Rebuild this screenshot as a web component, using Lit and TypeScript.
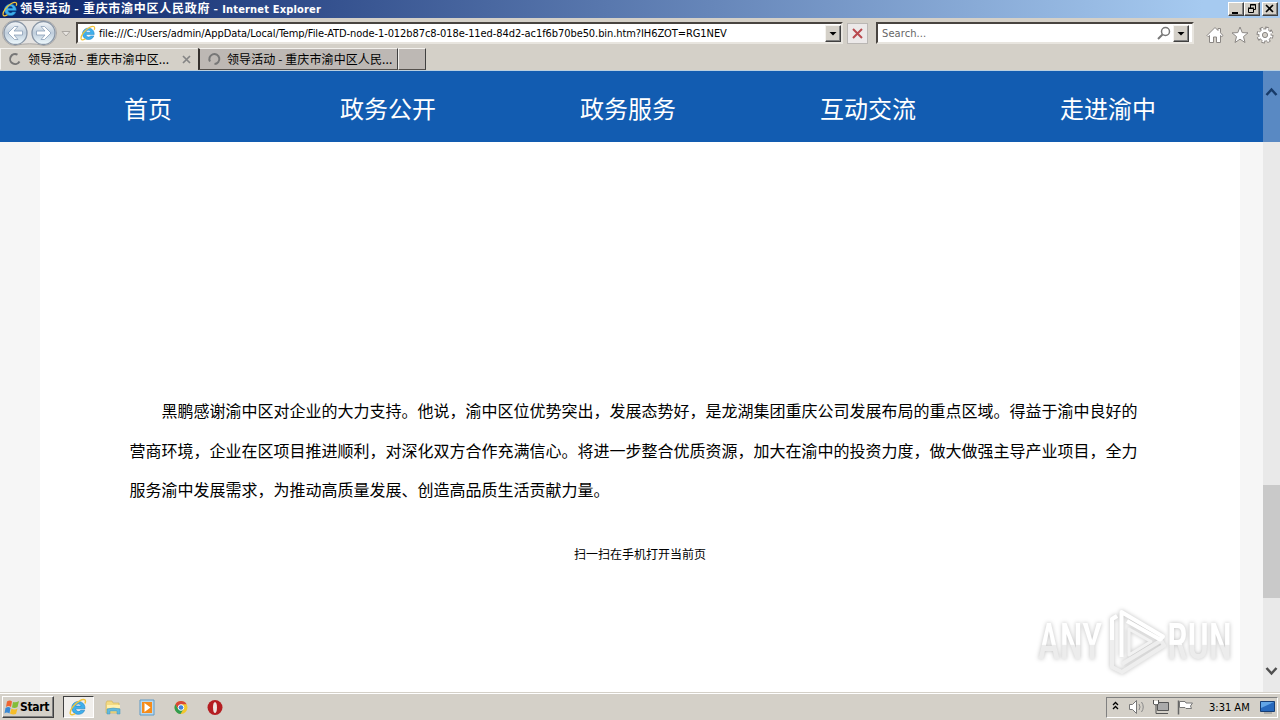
import { LitElement, css, html, svg } from 'lit'
import { customElement } from 'lit/decorators.js'

const ieLogo = (size: number) => html`
  <svg width=${size} height=${size} viewBox="0 0 16 16">
    <path d="M14.2 9.6H6C6.2 12.3 9.7 12.6 10.4 10.9h3.5C12.2 16.3 2.4 15.8 2.5 8.7 2.6 1.2 14.7 1.1 14.2 9.6ZM6 7.2H10.7C10.4 4.7 6.4 4.7 6 7.2Z" fill="#3fb0ec" stroke="#1b7cc0" stroke-width=".5"/>
    <path d="M14.2 4.8C15.6 1.2 13.2.4 9.4 2.5 4.7 5 .2 11.2 1.2 14c.5 1.3 2.6.9 4.3-.2" fill="none" stroke="#f1c33a" stroke-width="1.3"/>
  </svg>`

const spinner = (flip = false) => html`
  <svg width="14" height="14" viewBox="0 0 14 14">
    <path d=${flip ? 'M3 9.5A5 5 0 1 1 7.5 12' : 'M11.5 9.5A5 5 0 1 1 9.5 2.7'} fill="none" stroke="#777" stroke-width="2"/>
  </svg>`

const arrow = (left: boolean) => svg`
  <g transform=${left ? 'translate(15.5 15)' : 'translate(43.5 15) scale(-1 1)'}>
    <circle r="11.5" fill="url(#ball)" stroke="#8996a6" stroke-width="1.3"/>
    <path d="M-7.5 0 L-1 -6.5 H2.5 L-1.5 -2 H7 V2 H-1.5 L2.5 6.5 H-1Z" fill="#fff" stroke="#8ba0b8" stroke-width=".8"/>
  </g>`

const menu = ['首页', '政务公开', '政务服务', '互动交流', '走进渝中']

const lines = [
  '黑鹏感谢渝中区对企业的大力支持。他说，渝中区位优势突出，发展态势好，是龙湖集团重庆公司发展布局的重点区域。得益于渝中良好的',
  '营商环境，企业在区项目推进顺利，对深化双方合作充满信心。将进一步整合优质资源，加大在渝中的投资力度，做大做强主导产业项目，全力',
  '服务渝中发展需求，为推动高质量发展、创造高品质生活贡献力量。',
]

@customElement('app-root')
export class AppRoot extends LitElement {
  static styles = css`
    :host {
      display: flex;
      flex-direction: column;
      width: 1280px;
      height: 720px;
      overflow: hidden;
      background: #d4d0c8;
      color: #000;
      font-family: "DejaVu Sans Condensed", "DejaVu Sans", "Noto Sans CJK SC", sans-serif;
      font-stretch: condensed;
      font-size: 11px;
    }
    * {
      box-sizing: border-box;
    }
    svg {
      display: block;
      flex: none;
    }
    .title {
      height: 18px;
      flex: none;
      display: flex;
      align-items: center;
      padding: 0 2px;
      gap: 2px;
      background: linear-gradient(90deg, #0a246a, #a6caf0 94%);
      color: #fff;
      font-weight: bold;
    }
    .title-text {
      flex: 1;
      margin-top: -3px;
      white-space: nowrap;
      letter-spacing: 0.17px;
    }
    .cn {
      font-family: "Noto Sans CJK SC", sans-serif;
      font-size: 12px;
    }
    .title .cn {
      letter-spacing: 0.72px;
    }
    .title-buttons {
      display: flex;
    }
    .winbtn {
      width: 16px;
      height: 14px;
      background: #d4d0c8;
      border: 1px solid;
      border-color: #fff #404040 #404040 #fff;
      box-shadow: inset -1px -1px #808080;
    }
    .winbtn:last-child {
      margin-left: 2px;
    }
    .toolbar {
      height: 30px;
      flex: none;
      display: flex;
      align-items: center;
    }
    .back {
      width: 76px;
    }
    .field {
      height: 22px;
      display: flex;
      align-items: center;
      background: #fff;
      border: 2px solid;
      border-color: #484440 #e8e5df #e8e5df #484440;
    }
    .address {
      width: 767px;
      padding-left: 2px;
      gap: 3px;
    }
    .url {
      flex: 1;
      white-space: nowrap;
      letter-spacing: -0.08px;
    }
    .drop {
      width: 16px;
      height: 17px;
      background: #d4d0c8;
      border: 1px solid;
      border-color: #f4f2ee #404040 #404040 #f4f2ee;
      box-shadow: inset -1px -1px #808080;
    }
    .stop {
      width: 21px;
      height: 21px;
      margin: 0 7px 0 4px;
      border: 1px solid #bab7b4;
      background: #ece9e9;
    }
    .search {
      width: 318px;
      padding-left: 4px;
      margin-left: 1px;
    }
    .placeholder {
      flex: 1;
      color: #666;
      letter-spacing: 0.1px;
    }
    .search .drop {
      margin: 0 3px 0 2px;
    }
    .tools {
      display: flex;
      gap: 7px;
      margin: 4px 0 0 12px;
    }
    .tabs {
      height: 23px;
      flex: none;
      display: flex;
      border-bottom: 1px solid #b9cfe0;
    }
    .tab {
      height: 22px;
      display: flex;
      align-items: center;
      border: 1px solid;
      border-color: #f3f1ed #404040 #55504c #f3f1ed;
      white-space: nowrap;
    }
    .tab.active {
      width: 198px;
      padding: 0 6px 0 7px;
      border-color: #f3f1ed #d4d0c8 #d4d0c8 #f3f1ed;
      gap: 6px;
    }
    .tab.second {
      width: 200px;
      padding-left: 7px;
      background: #bdb8b4;
      border-left: 2px solid #35312e;
      gap: 6px;
    }
    .tab.blank {
      width: 28px;
      background: #bdb8b4;
    }
    .tab-text {
      flex: 1;
      margin-top: -2px;
      letter-spacing: 0.1px;
    }
    .view {
      height: 621px;
      flex: none;
      display: flex;
      background: #f6f6f6;
    }
    .page {
      width: 1263px;
      display: flex;
      flex-direction: column;
      font-family: "Noto Sans CJK SC", sans-serif;
    }
    .menu {
      height: 71px;
      flex: none;
      display: flex;
      padding: 0 35px 0 28px;
      background: #125cb1;
      color: #fff;
      font-size: 24px;
      line-height: 73px;
    }
    .menu-item {
      width: 240px;
      text-align: center;
    }
    .article {
      position: relative;
      width: 1200px;
      flex: 1;
      margin-left: 40px;
      padding: 249px 90px 0;
      background: #fff;
    }
    .line {
      height: 39.5px;
      font-size: 16px;
      line-height: 39px;
      margin-left: -0.5px;
      white-space: nowrap;
    }
    .line:first-child {
      padding-left: 32px;
    }
    .scan {
      margin-top: 34px;
      text-align: center;
      font-size: 12px;
      line-height: 20px;
    }
    .watermark {
      position: absolute;
      right: 4px;
      bottom: 12px;
      overflow: visible;
      filter: drop-shadow(0 0 2px rgba(0, 0, 0, 0.25));
    }
    .scrollbar {
      width: 17px;
      display: flex;
      flex-direction: column;
      background: #e9e9e9;
    }
    .scroll-top {
      height: 71px;
      background: #5989c3;
      padding-top: 14px;
    }
    .thumb {
      height: 113px;
      margin-top: 343px;
      background: #c9c9c9;
    }
    .scroll-bottom {
      margin-top: 65px;
    }
    .taskbar {
      height: 28px;
      flex: none;
      display: flex;
      align-items: center;
      border-top: 1px solid #d4d0c8;
      box-shadow: inset 0 1px #fff;
      padding: 1px 2px 0 2px;
    }
    .start {
      width: 52px;
      height: 22px;
      display: flex;
      align-items: center;
      padding-left: 1px;
      border: 1px solid;
      border-color: #fff #404040 #404040 #fff;
      box-shadow: inset -1px -1px #808080;
      font-weight: bold;
      font-size: 12px;
      letter-spacing: -0.3px;
    }
    .running {
      width: 31px;
      height: 22px;
      margin-left: 9px;
      padding: 1px 0 0 5px;
      background: #f1efec;
      border: 1px solid;
      border-color: #404040 #fff #fff #404040;
    }
    .launch {
      display: flex;
      flex: 1;
      gap: 18px;
      margin-left: 11px;
    }
    .tray {
      width: 172px;
      height: 21px;
      display: flex;
      align-items: center;
      border: 1px solid;
      border-color: #808080 #fff #fff #808080;
    }
    .clock {
      width: 42px;
      margin-left: 15px;
      white-space: nowrap;
    }
    .desk {
      margin-left: 9px;
    }
  `

  drop() {
    return html`<div class="drop"><svg width="14" height="15"><path d="M3.5 6h7L7 9.5z"/></svg></div>`
  }

  renderTitle() {
    return html`
      <div class="title">
        ${ieLogo(16)}
        <div class="title-text"><span class="cn">领导活动 - 重庆市渝中区人民政府 - </span>Internet Explorer</div>
        <div class="title-buttons">
          <div class="winbtn"><svg width="14" height="12"><path d="M3 9h6v2H3z"/></svg></div>
          <div class="winbtn"><svg width="14" height="12"><path d="M5.5 6V1.5h5v5H9M5 2h6M3.5 5.5h5v4h-5zM3 5h6" fill="none" stroke="#000"/></svg></div>
          <div class="winbtn"><svg width="14" height="12"><path d="M3 2l7 7M10 2l-7 7" stroke="#000" stroke-width="1.6"/></svg></div>
        </div>
      </div>`
  }

  renderToolbar() {
    return html`
      <div class="toolbar">
        <svg class="back" width="76" height="30" viewBox="0 0 76 30">
          <defs>
            <linearGradient id="ball" x1="0" y1="0" x2="0" y2="1">
              <stop offset="0" stop-color="#f5f7f9"/><stop offset=".5" stop-color="#bfcddb"/><stop offset="1" stop-color="#f0fbff"/>
            </linearGradient>
          </defs>
          <path d="M15 2.5H44A12.5 12.5 0 0 1 44 27.5Q29.5 24 15 27.5A12.5 12.5 0 0 1 15 2.5Z" fill="#e5e3e1" stroke="#aaa8a6"/>
          ${arrow(true)}${arrow(false)}
          <path d="M62 13.5h8l-4 4.5z" fill="#e8e5e1" stroke="#aaa6a1"/>
        </svg>
        <div class="field address">
          ${ieLogo(16)}
          <div class="url">file:///C:/Users/admin/AppData/Local/Temp/File-ATD-node-1-012b87c8-018e-11ed-84d2-ac1f6b70be50.bin.htm?IH6ZOT=RG1NEV</div>
          ${this.drop()}
        </div>
        <div class="stop"><svg width="19" height="19"><path d="M5 5l9 9M14 5l-9 9" stroke="#b94a4f" stroke-width="2"/></svg></div>
        <div class="field search">
          <div class="placeholder">Search...</div>
          <svg width="14" height="14"><circle cx="8.5" cy="5.5" r="4" fill="none" stroke="#777" stroke-width="1.5"/><path d="M5.5 8.5L1 13" stroke="#777" stroke-width="2"/></svg>
          ${this.drop()}
        </div>
        <div class="tools">
          <svg width="18" height="18"><path d="M1 9.5L9 1.5l3 3V2.5h2.5v4.3L17 9.5l-1.2 1.2-1.3-1.2V16.5h-4V11h-3v5.5h-4V9.5l-1.3 1.2z" fill="#fff" stroke="#8b8784"/></svg>
          <svg width="18" height="18"><path d="M9 1l2.2 5.6 5.8.3-4.5 3.7 1.5 5.9L9 13.2l-5 3.3 1.5-5.9L1 6.9l5.8-.3z" fill="#fff" stroke="#8b8784"/></svg>
          <svg width="18" height="18">
            <circle cx="9" cy="9" r="7" fill="none" stroke="#8b8784" stroke-width="3" stroke-dasharray="3.3 2.198"/>
            <circle cx="9" cy="9" r="6.2" fill="#fff" stroke="#8b8784"/>
            <circle cx="9" cy="9" r="6.3" fill="none" stroke="#fff" stroke-width="2.4" stroke-dasharray="1.8 3.148" stroke-dashoffset="-.6"/>
            <circle cx="9" cy="9" r="2.6" fill="#d4d0c8" stroke="#8b8784"/>
          </svg>
        </div>
      </div>
      <div class="tabs">
        <div class="tab active">
          ${spinner()}
          <div class="tab-text cn">领导活动 - 重庆市渝中区...</div>
          <svg width="9" height="9"><path d="M1 1l7 7M8 1L1 8" stroke="#858585" stroke-width="1.7"/></svg>
        </div>
        <div class="tab second">
          ${spinner(true)}
          <div class="tab-text cn">领导活动 - 重庆市渝中区人民...</div>
        </div>
        <div class="tab blank"></div>
      </div>`
  }

  renderPage() {
    return html`
      <div class="view">
        <div class="page">
          <div class="menu">${menu.map(item => html`<div class="menu-item">${item}</div>`)}</div>
          <div class="article">
            ${lines.map(line => html`<div class="line">${line}</div>`)}
            <div class="scan">扫一扫在手机打开当前页</div>
            <svg class="watermark" width="202" height="78" viewBox="0 0 202 78">
              <defs>
                <linearGradient id="mark" x1="0" y1="0" x2="0" y2="1">
                  <stop offset=".54" stop-color="#fff"/><stop offset=".56" stop-color="#ececec"/>
                </linearGradient>
              </defs>
              <g fill="url(#mark)" font-family="Roboto, sans-serif" font-size="50" font-weight="500">
                <text x="4" y="57" textLength="64" lengthAdjust="spacingAndGlyphs">ANY</text>
                <text x="133" y="57" textLength="65" lengthAdjust="spacingAndGlyphs">RUN</text>
              </g>
              <g fill="none" stroke-width="4" stroke-linejoin="round">
                <path d="M83 14L78 17V65L88 70L130 43.5L127 38.5L88 62" stroke="#eee"/>
                <path d="M95 47V27L117 39.5L95 53Z" stroke="#f2f2f2" stroke-width="3"/>
                <path d="M83 14L78 17V38M87.5 55V10L129 34.5L126 37.5L93 19" stroke="#fff"/>
              </g>
            </svg>
          </div>
        </div>
        <div class="scrollbar">
          <div class="scroll-top"><svg width="17" height="14"><path d="M3.5 10L8.5 4.5L13.5 10" fill="none" stroke="#173b69" stroke-width="2.5"/></svg></div>
          <div class="thumb"></div>
          <div class="scroll-bottom"><svg width="17" height="14"><path d="M3.5 5L8.5 10.5L13.5 5" fill="none" stroke="#4f4f4f" stroke-width="2.5"/></svg></div>
        </div>
      </div>`
  }

  renderTaskbar() {
    return html`
      <div class="taskbar">
        <div class="start">
          <svg width="16" height="16"><path d="M3 2.5q3-2 5 0L7 8Q4.500 6 2 8z" fill="#ef6531"/><path d="M9 3q3 1 6-1l-1.500 6Q11 9.500 8 8.500z" fill="#83bd38"/><path d="M1.500 9q3-2 5 0l-1 5.500q-3-2-5 0z" fill="#3988d4"/><path d="M7.500 9.500q3 2 6 0l-1.500 5.500q-3 1-6-.5z" fill="#f6bd28"/></svg>
          Start
        </div>
        <div class="running">${ieLogo(18)}</div>
        <div class="launch">
          <svg width="16" height="17"><path d="M1 4l1-2h5l1 2h6v10H1z" fill="#f3da83" stroke="#cfae55" stroke-width=".6"/><path d="M2 6h13v3H2z" fill="#fff0ae"/><path d="M2 10q6-2 13 0v5h-3v-3H5v3H2z" fill="#62b9dd" stroke="#4194b8" stroke-width=".5"/></svg>
          <svg width="16" height="17"><path d="M1 1h14v15H1z" fill="#b8d8ef" stroke="#5f9bc7"/><path d="M3 3h10v11H3z" fill="#f58c1b"/><path d="M5.5 4L11.5 8.5L5.5 13z" fill="#fff"/></svg>
          <svg width="16" height="17" viewBox="0 0 16 17"><circle cx="8" cy="8.5" r="6.5" fill="#f3c72d"/><path d="M2.4 5.2A6.5 6.5 0 0 1 13.6 5.2H8L5 10z" fill="#d94738"/><path d="M2.4 5.2A6.5 6.5 0 0 0 7.5 15L10.5 10H5z" fill="#319c50"/><circle cx="8" cy="8.5" r="2.8" fill="#3f83dc" stroke="#fff"/></svg>
          <svg width="16" height="17"><circle cx="8" cy="8.5" r="7.5" fill="#b51e22"/><ellipse cx="8" cy="8.5" rx="2" ry="5.5" fill="#eee6e2"/></svg>
        </div>
        <div class="tray">
          <svg width="78" height="18"><path d="M6 7l2.5-2.5L11 7M6 11l2.5-2.5L11 11" fill="none" stroke="#000" stroke-width="1.3"/>
            <path d="M22.5 6.5h3l4-4v13l-4-4h-3z" fill="#fff" stroke="#777"/><path d="M32 6q2 3 0 6M34.5 4q3.5 5 0 10" fill="none" stroke="#888"/>
            <path d="M50.5 4.5h11v8h-11zM53 15.5h8" fill="#aaa" stroke="#555"/><path d="M46.5 2v4q2.5 2 5 0V2M49 7v8.5h4" fill="none" stroke="#555"/><path d="M47 3h4v3h-4z" fill="#fff"/>
            <path d="M71.5 2.5v14" stroke="#666" stroke-width="1.5"/><path d="M72.5 3.5h6v6h-6z" fill="#fff" stroke="#777"/>
          </svg>
          <svg width="9" height="18"><path d="M0 3.5l1 1.5h6.5l-2 3 1 2.500H1L0 9.500" fill="#fff" stroke="#777"/></svg>
          <div class="clock">3:31 AM</div>
          <svg class="desk" width="16" height="14"><path d="M.5 1.5h14v10H.5z" fill="#2769bd" stroke="#173e75"/><path d="M1 2h13L1 8z" fill="#62a5e6"/><path d="M4 13h8" stroke="#888"/></svg>
        </div>
      </div>`
  }

  render() {
    return html`${this.renderTitle()}${this.renderToolbar()}${this.renderPage()}${this.renderTaskbar()}`
  }
}
